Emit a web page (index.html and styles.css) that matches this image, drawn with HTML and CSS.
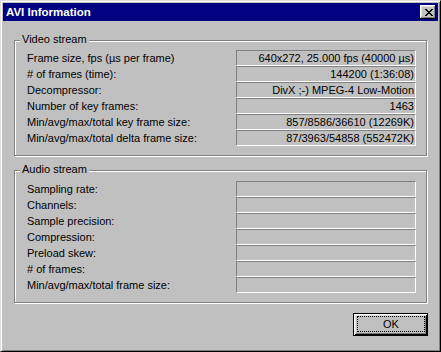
FILE: index.html
```html
<!DOCTYPE html>
<html lang="en">
<head>
    <meta charset="UTF-8">
    <title>AVI Information</title>
    <link rel="stylesheet" href="styles.css">
</head>
<body>
    <div class="window">
        <div class="titlebar">
            <span class="title">AVI Information</span>
            <button class="close-btn">
                <svg width="8" height="7" viewBox="0 0 8 7" shape-rendering="crispEdges">
                    <path d="M0 0h2v1h-2zM6 0h2v1h-2zM1 1h2v1h-2zM5 1h2v1h-2zM2 2h4v1h-4zM3 3h2v1h-2zM2 4h4v1h-4zM1 5h2v1h-2zM5 5h2v1h-2zM0 6h2v1h-2zM6 6h2v1h-2z" fill="#000"/>
                </svg>
            </button>
        </div>
        <div class="content">
            <div class="group video">
                <span class="legend">Video stream</span>
                <div class="rows">
                    <span class="label">Frame size, fps (µs per frame)</span>
                    <span class="field">640x272, 25.000 fps (40000 µs)</span>
                    <span class="label"># of frames (time):</span>
                    <span class="field">144200 (1:36:08)</span>
                    <span class="label">Decompressor:</span>
                    <span class="field">DivX ;-) MPEG-4 Low-Motion</span>
                    <span class="label">Number of key frames:</span>
                    <span class="field">1463</span>
                    <span class="label">Min/avg/max/total key frame size:</span>
                    <span class="field">857/8586/36610 (12269K)</span>
                    <span class="label">Min/avg/max/total delta frame size:</span>
                    <span class="field">87/3963/54858 (552472K)</span>
                </div>
            </div>
            <div class="group audio">
                <span class="legend">Audio stream</span>
                <div class="rows">
                    <span class="label">Sampling rate:</span>
                    <span class="field"></span>
                    <span class="label">Channels:</span>
                    <span class="field"></span>
                    <span class="label">Sample precision:</span>
                    <span class="field"></span>
                    <span class="label">Compression:</span>
                    <span class="field"></span>
                    <span class="label">Preload skew:</span>
                    <span class="field"></span>
                    <span class="label"># of frames:</span>
                    <span class="field"></span>
                    <span class="label">Min/avg/max/total frame size:</span>
                    <span class="field"></span>
                </div>
            </div>
            <div class="actions">
                <button class="ok-btn"><span class="focus">OK</span></button>
            </div>
        </div>
    </div>
</body>
</html>
```

FILE: styles.css
```css
html, body {
    margin: 0;
    padding: 0;
}
body {
    background: #c0c0c0;
    font-family: 'Liberation Sans', Arial, sans-serif;
    font-size: 11px;
    color: #000;
}
.window {
    width: 441px;
    height: 352px;
    box-sizing: border-box;
    border: 1px solid;
    border-color: #dfdfdf #000 #000 #dfdfdf;
    box-shadow: inset 1px 1px #fff, inset -1px -1px #808080;
    padding: 2px;
    background: #c0c0c0;
}
.titlebar {
    height: 18px;
    background: #000080;
    color: #fff;
    display: flex;
    align-items: center;
    padding: 0 2px 0 3px;
}
.title {
    flex: 1;
    font-weight: bold;
    font-size: 11.5px;
}
.close-btn {
    width: 16px;
    height: 14px;
    padding: 0;
    border: none;
    background: #c0c0c0;
    box-shadow: inset -1px -1px #000, inset 1px 1px #fff, inset -2px -2px #808080, inset 2px 2px #dfdfdf;
    display: flex;
    align-items: center;
    justify-content: center;
    padding-left: 1px;
}
.content {
    padding: 19px 11px 0;
    display: flex;
    flex-direction: column;
}
.group {
    position: relative;
    width: 413px;
    box-sizing: border-box;
    border: 1px solid #808080;
    box-shadow: inset 1px 1px #fff, 1px 1px #fff;
    padding: 9px 10px 9px 12px;
}
.group.audio {
    margin-top: 14px;
    padding-top: 10px;
}
.legend {
    position: absolute;
    top: -8px;
    left: 5px;
    padding: 0 2px;
    line-height: 13px;
    background: #c0c0c0;
}
.rows {
    display: grid;
    grid-template-columns: 1fr 180px;
    grid-auto-rows: 16px;
}
.label {
    line-height: 16px;
    white-space: nowrap;
}
.field {
    box-sizing: border-box;
    border: 1px solid;
    border-color: #808080 #fff #fff #808080;
    line-height: 14px;
    text-align: right;
    padding-right: 1px;
    white-space: nowrap;
}
.actions {
    display: flex;
    justify-content: flex-end;
    margin-top: 10px;
    margin-right: -1px;
}
.ok-btn {
    width: 75px;
    height: 23px;
    box-sizing: border-box;
    border: 1px solid #000;
    background: #c0c0c0;
    box-shadow: inset 1px 1px #fff, inset -1px -1px #000, inset 2px 2px #dfdfdf, inset -2px -2px #808080;
    padding: 2px 2px 3px 3px;
    font-family: inherit;
    font-size: 11px;
    color: #000;
}
.focus {
    display: block;
    height: 100%;
    box-sizing: border-box;
    border: 1px dotted #000;
    line-height: 14px;
    text-align: center;
}
```
